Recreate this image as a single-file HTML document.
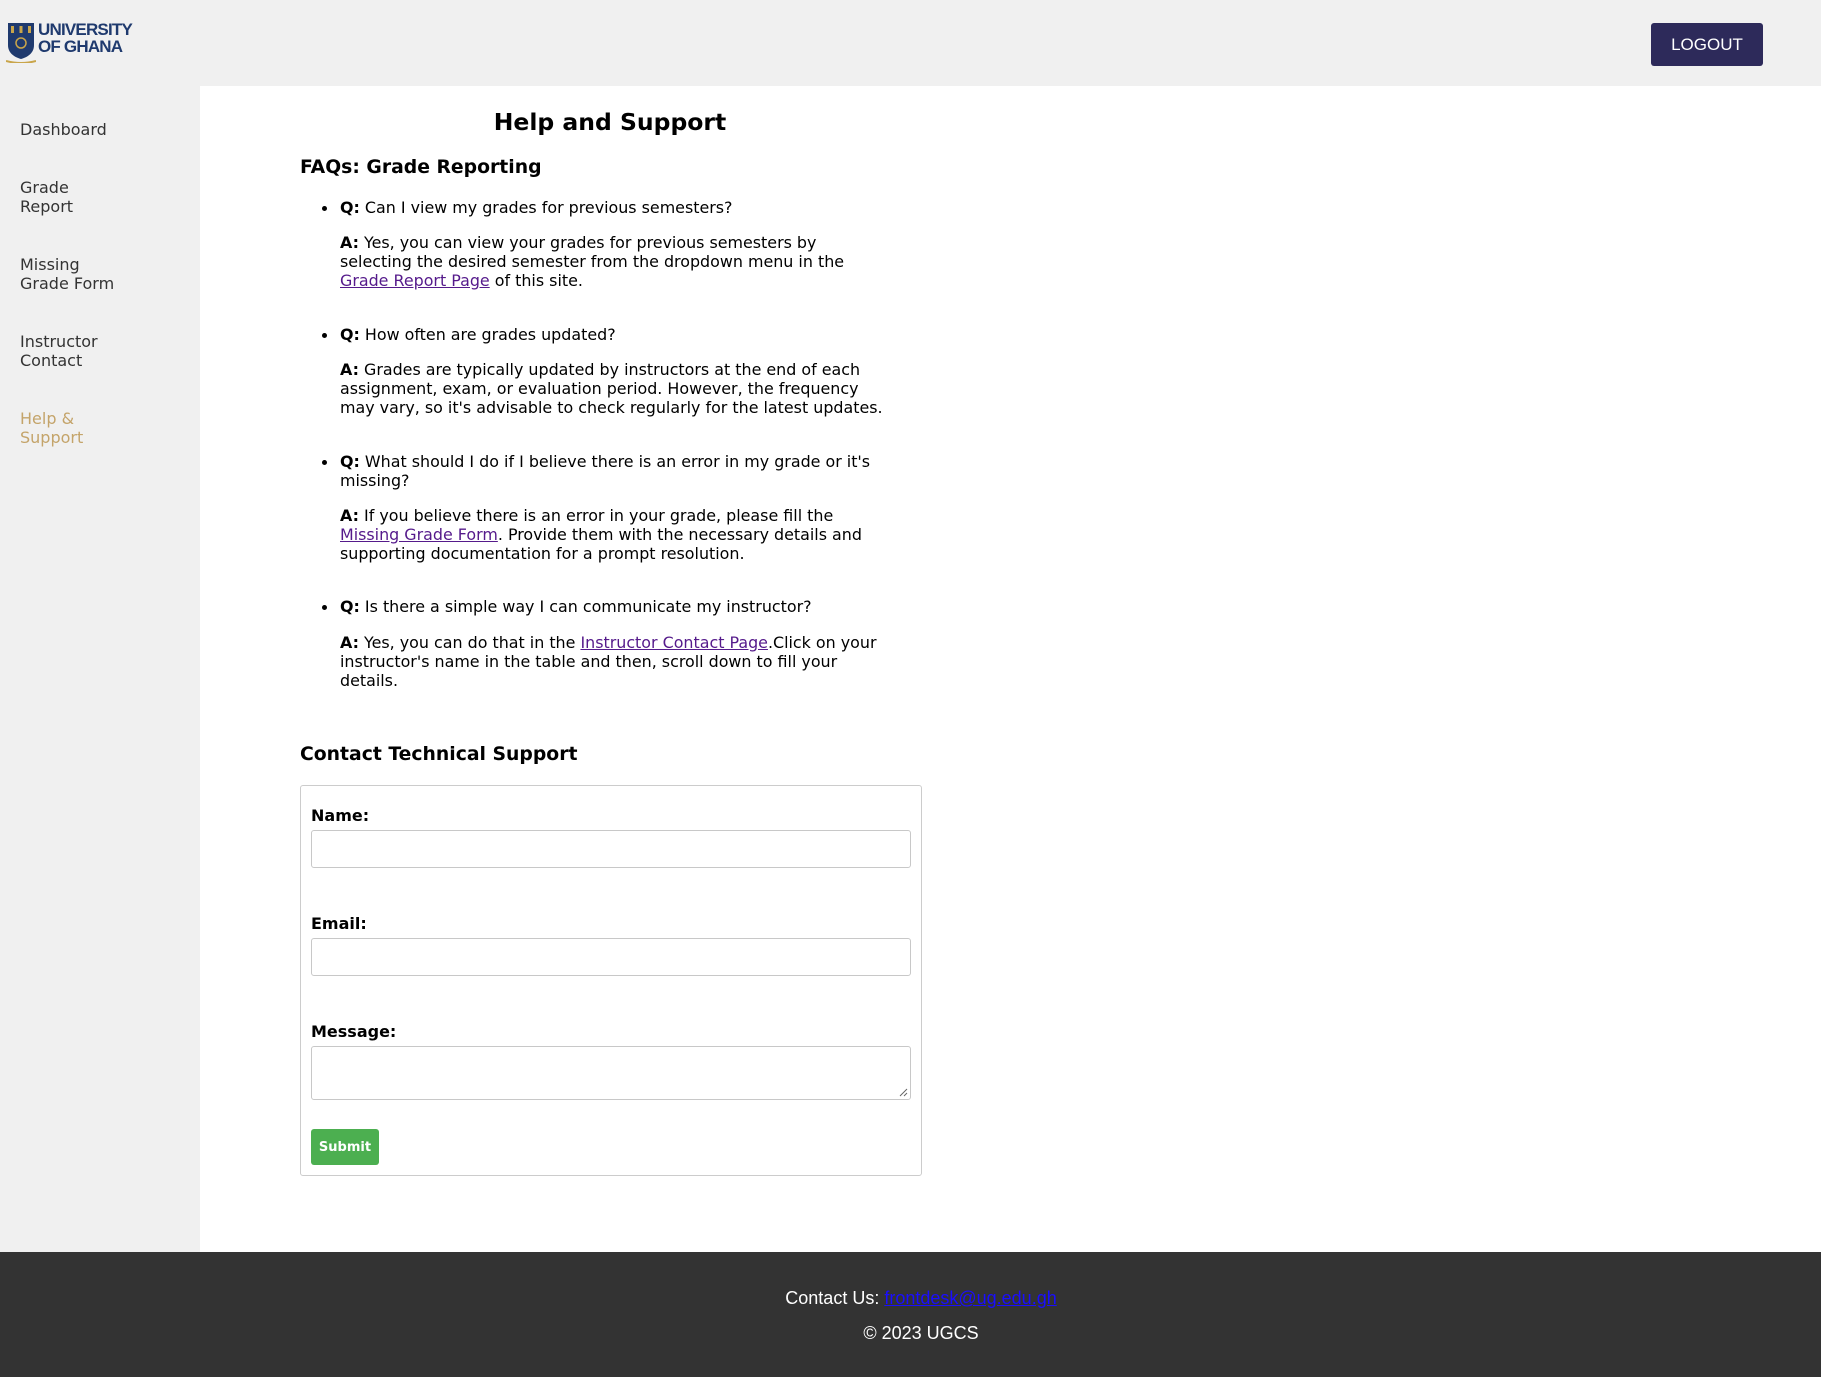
<!DOCTYPE html>
<html><head><meta charset="utf-8"><style>
*{margin:0;padding:0;box-sizing:border-box}
body{width:1821px;height:1377px;background:#f0f0f0;font-family:"DejaVu Sans",sans-serif;color:#000;position:relative;overflow:hidden}
.abs{position:absolute}
.nav{position:absolute;left:20px;font-size:16px;line-height:19px;color:#333}
.main{position:absolute;left:200px;top:86px;width:1621px;height:1166px;background:#fff}
.t{position:absolute;font-size:15.9px;line-height:19px;white-space:nowrap}
a{color:#551a8b}
.lbl{position:absolute;left:311px;font-weight:bold;font-size:16px}
.inp{position:absolute;left:311px;width:600px;border:1px solid #c8c8c8;border-radius:3px;background:#fff}
.bul{position:absolute;left:322px;width:5px;height:5px;border-radius:50%;background:#000}
</style></head><body>
<div class="abs" style="left:6px;top:21px">
<svg width="30" height="42" viewBox="0 0 30 42"><path d="M2 2h26v22c0 8-6 12-13 14C8 36 2 32 2 24z" fill="#1f3a6e"/><g fill="#c9a54a"><rect x="5" y="5" width="3" height="7"/><rect x="13.5" y="5" width="3" height="7"/><rect x="22" y="5" width="3" height="7"/><circle cx="15" cy="22" r="5" fill="none" stroke="#c9a54a" stroke-width="1.5"/></g><path d="M0 40q15 4 30 0" stroke="#c9a54a" stroke-width="2" fill="none"/></svg>
</div>
<div class="abs" style="left:38px;top:21px;font-family:'Liberation Sans',sans-serif;font-weight:bold;font-size:17px;line-height:17px;color:#1f3a6e;letter-spacing:-0.8px">UNIVERSITY<br>OF GHANA</div>
<div class="abs" style="left:1651px;top:23px;width:112px;height:43px;background:#2d2a5a;border-radius:3px;color:#fff;font-family:'Liberation Sans',sans-serif;font-size:17px;line-height:43px;text-align:center">LOGOUT</div>

<div class="nav" style="top:120px">Dashboard</div>
<div class="nav" style="top:178px">Grade<br>Report</div>
<div class="nav" style="top:255px">Missing<br>Grade Form</div>
<div class="nav" style="top:332px">Instructor<br>Contact</div>
<div class="nav" style="top:409px;color:#c4a46a">Help &amp;<br>Support</div>

<div class="main"></div>
<div class="abs" style="left:300px;width:620px;top:105px;text-align:center;font-weight:bold;font-size:23.5px;line-height:34px">Help and Support</div>
<div class="abs" style="left:300px;top:155px;font-weight:bold;font-size:18.8px;line-height:26px">FAQs: Grade Reporting</div>

<div class="bul" style="top:206px"></div>
<div class="t" style="left:340px;top:198px"><b>Q:</b> Can I view my grades for previous semesters?</div>
<div class="t" style="left:340px;top:233px"><b>A:</b> Yes, you can view your grades for previous semesters by<br>selecting the desired semester from the dropdown menu in the<br><a href="#">Grade Report Page</a> of this site.</div>

<div class="bul" style="top:333px"></div>
<div class="t" style="left:340px;top:325px"><b>Q:</b> How often are grades updated?</div>
<div class="t" style="left:340px;top:360px"><b>A:</b> Grades are typically updated by instructors at the end of each<br>assignment, exam, or evaluation period. However, the frequency<br>may vary, so it's advisable to check regularly for the latest updates.</div>

<div class="bul" style="top:460px"></div>
<div class="t" style="left:340px;top:452px"><b>Q:</b> What should I do if I believe there is an error in my grade or it's<br>missing?</div>
<div class="t" style="left:340px;top:506px"><b>A:</b> If you believe there is an error in your grade, please fill the<br><a href="#">Missing Grade Form</a>. Provide them with the necessary details and<br>supporting documentation for a prompt resolution.</div>

<div class="bul" style="top:605px"></div>
<div class="t" style="left:340px;top:597px"><b>Q:</b> Is there a simple way I can communicate my instructor?</div>
<div class="t" style="left:340px;top:633px"><b>A:</b> Yes, you can do that in the <a href="#">Instructor Contact Page</a>.Click on your<br>instructor's name in the table and then, scroll down to fill your<br>details.</div>

<div class="abs" style="left:300px;top:742px;font-weight:bold;font-size:18.8px;line-height:26px">Contact Technical Support</div>
<div class="abs" style="left:300px;top:785px;width:622px;height:391px;border:1px solid #ccc;border-radius:3px"></div>
<div class="lbl" style="top:806px">Name:</div>
<div class="inp" style="top:830px;height:38px"></div>
<div class="lbl" style="top:914px">Email:</div>
<div class="inp" style="top:938px;height:38px"></div>
<div class="lbl" style="top:1022px">Message:</div>
<div class="inp" style="top:1046px;height:54px"><svg class="abs" style="right:2px;bottom:2px" width="9" height="9"><path d="M1 8L8 1M5 8L8 5" stroke="#666" stroke-width="1"/></svg></div>
<div class="abs" style="left:311px;top:1129px;width:68px;height:36px;background:#4caf50;border-radius:3px;color:#fff;font-size:13px;font-weight:bold;line-height:38px;text-align:center">Submit</div>

<div class="abs" style="left:0;top:1252px;width:1821px;height:125px;background:#333;color:#fff;font-family:'Liberation Sans',sans-serif;font-size:18px;text-align:center">
<div style="position:absolute;left:0;width:1842px;top:36px">Contact Us: <a href="#" style="color:#1a0dff">frontdesk@ug.edu.gh</a></div>
<div style="position:absolute;left:0;width:1842px;top:71px">© 2023 UGCS</div>
</div>
</body></html>
